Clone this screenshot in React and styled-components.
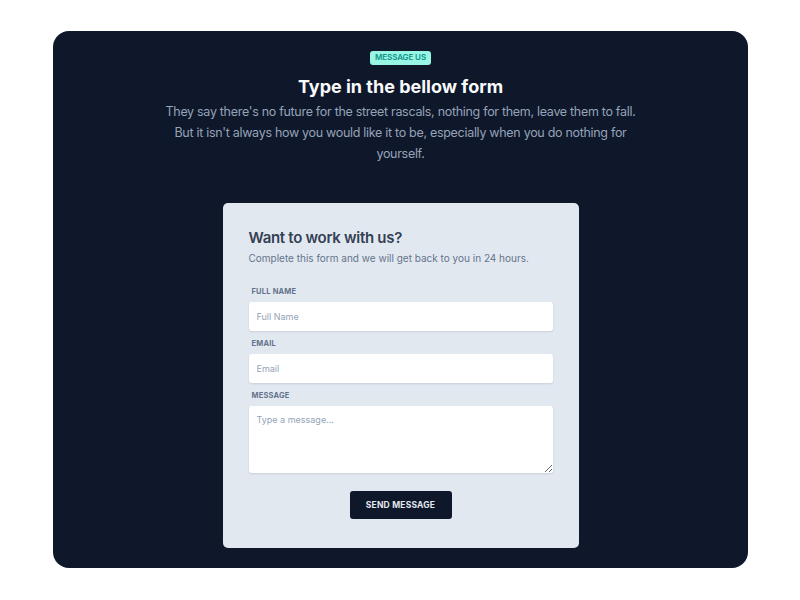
import styled, { createGlobalStyle } from "styled-components";

const GlobalStyle = createGlobalStyle`
  body {
    margin: 0;
    background: #ffffff;
    font-family: Inter, "Noto Sans", sans-serif;
  }
`;

export default function App() {
  return (
    <>
      <GlobalStyle />
      <StPage>
        <StPanel>
          <StBadge>MESSAGE US</StBadge>
          <StTitle>Type in the bellow form</StTitle>
          <StLead>
            They say there's no future for the street rascals, nothing for them, leave them to fall. But it isn't
            always how you would like it to be, especially when you do nothing for yourself.
          </StLead>
          <StCard>
            <StCardTitle>Want to work with us?</StCardTitle>
            <StCardDesc>Complete this form and we will get back to you in 24 hours.</StCardDesc>
            <StField>
              <StLabel>FULL NAME</StLabel>
              <StInput placeholder="Full Name" />
            </StField>
            <StField>
              <StLabel>EMAIL</StLabel>
              <StInput placeholder="Email" />
            </StField>
            <StField>
              <StLabel>MESSAGE</StLabel>
              <StTextarea placeholder="Type a message..." />
            </StField>
            <StButton type="button">SEND MESSAGE</StButton>
          </StCard>
        </StPanel>
      </StPage>
    </>
  );
}

const StPage = styled.main`
  display: flex;
  justify-content: center;

  padding: 31px 0 0 1px;
`;

const StPanel = styled.section`
  display: flex;
  flex-direction: column;
  align-items: center;

  box-sizing: border-box;
  border-radius: 16px;
  padding: 20px 0 20px;
  width: 695px;
  height: 537px;

  background: #0f172a;
`;

const StBadge = styled.span`
  border-radius: 3px;
  padding: 2px 5px;

  background: #99f6e4;
  color: #0d9488;
  font-size: 8px;
  font-weight: 600;
  line-height: 9.5px;
  letter-spacing: -0.1px;
`;

const StTitle = styled.h1`
  margin: 10px 0 0;

  color: #f8fafc;
  font-size: 18px;
  font-weight: 700;
  line-height: 24px;
`;

const StLead = styled.p`
  margin: 2px 0 0;
  max-width: 490px;

  color: #94a3b8;
  font-size: 12.5px;
  line-height: 21px;
  letter-spacing: -0.3px;
  text-align: center;
`;

const StCard = styled.form`
  display: flex;
  flex-direction: column;

  box-sizing: border-box;
  margin-top: 39px;
  border-radius: 5px;
  padding: 24px 26px 29px;
  width: 356px;

  background: #e2e8f0;
`;

const StCardTitle = styled.h2`
  margin: 0;

  color: #334155;
  font-size: 15px;
  font-weight: 600;
  line-height: 22px;
  letter-spacing: -0.3px;
`;

const StCardDesc = styled.p`
  margin: 1px 0 0;

  color: #64748b;
  font-size: 10px;
  line-height: 16px;
`;

const StField = styled.label`
  display: flex;
  flex-direction: column;

  margin-top: 8px;

  &:first-of-type {
    margin-top: 21px;
  }
`;

const StLabel = styled.span`
  margin: 0 0 5px 3px;

  color: #64748b;
  font-size: 7.5px;
  font-weight: 700;
  line-height: 10px;
  letter-spacing: 0.2px;
`;

const fieldBase = `
  box-sizing: border-box;
  border: 0;
  border-radius: 3px;
  padding: 0 8px;
  width: 100%;

  background: #ffffff;
  box-shadow: 0 1px 2px rgba(15, 23, 42, 0.12);
  color: #334155;
  font-family: Inter, "Noto Sans", sans-serif;
  font-size: 9px;
  outline: none;

  &::placeholder {
    color: #94a3b8;
  }
`;

const StInput = styled.input`
  ${fieldBase}
  height: 29px;
`;

const StTextarea = styled.textarea`
  ${fieldBase}
  display: block;
  padding-top: 8px;
  height: 67px;
  resize: vertical;
`;

const StButton = styled.button`
  align-self: center;

  margin-top: 18px;
  border: 0;
  border-radius: 3px;
  width: 102px;
  height: 28px;

  background: #0f172a;
  color: #e2e8f0;
  font-family: Inter, "Noto Sans", sans-serif;
  font-size: 8.5px;
  font-weight: 700;
  letter-spacing: 0.2px;
`;
